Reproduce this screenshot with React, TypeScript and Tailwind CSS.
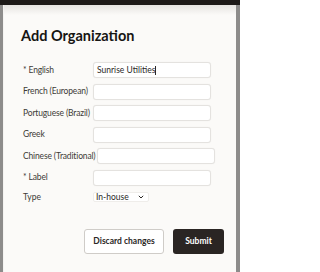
import React from 'react';

const font = { fontFamily: 'Lato, "Open Sans", "Liberation Sans", sans-serif' };

const fields = [
  { label: '* English', value: 'Sunrise Utilities', focus: true },
  { label: 'French (European)' },
  { label: 'Portuguese (Brazil)' },
  { label: 'Greek' },
  { label: 'Chinese (Traditional)' },
  { label: '* Label' },
];

type Field = { label: string; value?: string; focus?: boolean };

const Row = ({ label, value, focus }: Field) => (
  <div className="flex items-center h-4">
    <div className="min-w-[68px] mr-[2px] text-[8.5px] tracking-[-0.15px] text-[#3d3a37] whitespace-nowrap">{label}</div>
    <div className="w-[118px] h-4 bg-white border border-[#e4e2df] rounded-[3px] shadow-[0_0_1px_rgba(0,0,0,0.08)] flex items-center px-[3px] text-[8.5px] text-[#2b2826]">
      {value}
      {focus && <span className="w-px h-[9px] bg-[#2b2826]" />}
    </div>
  </div>
);

export default function App() {
  return (
    <div className="w-[240px] h-[272px] bg-[#8d8c8b] flex flex-col overflow-hidden" style={font}>
      {/* dark page header behind the dialog */}
      <div className="h-[5px] bg-[#1d1a18] shrink-0" />
      <div className="flex flex-1">
        <div className="w-[3px] bg-[#8d8c8b]" />
        <div className="w-px bg-[#f4f3f1]" />
        {/* dialog */}
        <div className="flex-1 bg-[#fbfaf8] flex flex-col">
          <div className="h-[10px] bg-gradient-to-b from-[#e6e4e1] to-[#fbfaf8]" />
          <h1 className="ml-[17px] mt-[11px] text-[14.5px] leading-[20px] font-bold text-[#161513]">Add Organization</h1>
          <div className="ml-[19px] mt-[16px] flex flex-col gap-[5.5px]">
            {fields.map((f) => (
              <Row key={f.label} {...f} />
            ))}
            <div className="flex items-center h-[12px]">
              <div className="min-w-[68px] mr-[2px] text-[8.5px] text-[#3d3a37]">Type</div>
              <div className="w-[56px] h-[10px] bg-white border border-[#efedea] rounded-[2px] flex items-center justify-between px-[2px] text-[8.5px] text-[#2b2826]">
                <span>In-house</span>
                <svg width="6" height="4" viewBox="0 0 6 4" className="mr-[2px]">
                  <path d="M0.8 0.8 L3 3 L5.2 0.8" fill="none" stroke="#2b2826" strokeWidth="1" />
                </svg>
              </div>
            </div>
          </div>
          <div className="flex justify-end gap-[9px] mr-[12px] mt-[26px]">
            <button className="w-[80px] h-[25px] bg-white border border-[#cfccc8] rounded-[3px] text-[8.5px] font-bold text-[#2b2826]">
              Discard changes
            </button>
            <button className="w-[51px] h-[25px] bg-[#2a2523] rounded-[3px] text-[8.5px] font-bold text-white">Submit</button>
          </div>
        </div>
        <div className="w-[4px] bg-[#8d8c8b]" />
      </div>
    </div>
  );
}
